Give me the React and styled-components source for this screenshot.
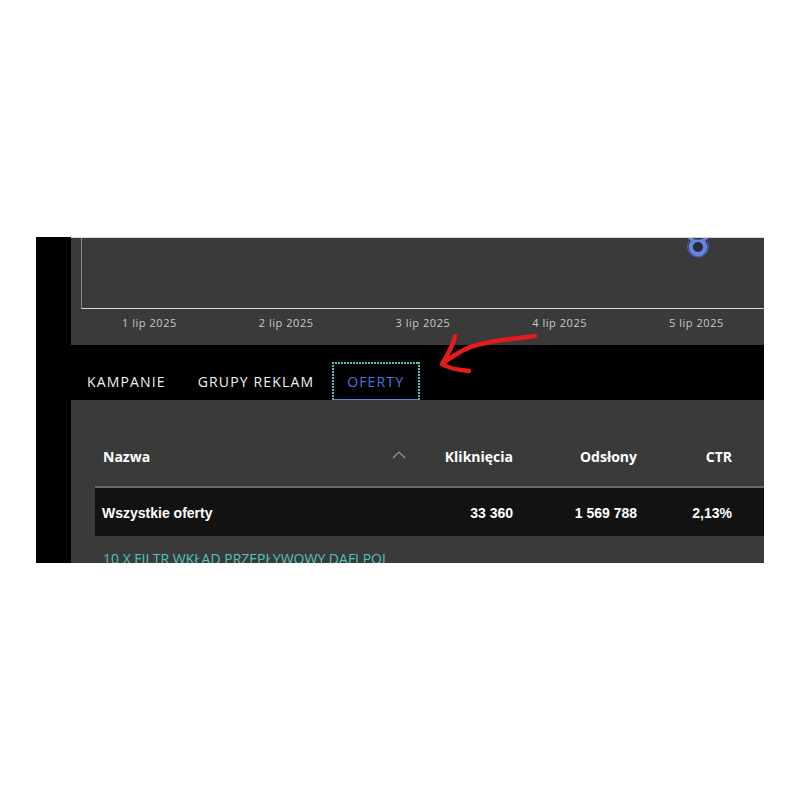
import React from "react";
import styled, { createGlobalStyle } from "styled-components";

const GlobalStyle = createGlobalStyle`
  html, body {
    margin: 0;
    background: #fff;
    font-family: "Open Sans", sans-serif;
  }
`;

const dates = ["1 lip 2025", "2 lip 2025", "3 lip 2025", "4 lip 2025", "5 lip 2025"];

const App = () => {
  return (
    <>
      <GlobalStyle />
      <Frame>
        <Sidebar />
        <Main>
          <ChartPanel>
            <Plot>
              <Marker viewBox="0 0 24 24">
                <path d="M3 6 A10.5 10.5 0 1 0 21 6" stroke="#4c64b4" strokeWidth="1" fill="none" />
                <circle cx="12" cy="12" r="7.2" stroke="#6484e6" strokeWidth="4.2" fill="#2b2c30" />
                <path d="M8.5 3 H15.5 V4.6 H8.5 Z" fill="#3a3a3a" />
                <path d="M3 2.5 L7.5 6 M21 2.5 L16.5 6" stroke="#6484e6" strokeWidth="3" fill="none" />
              </Marker>
            </Plot>
            <Dates>
              {dates.map((date) => (
                <DateLabel key={date}>{date}</DateLabel>
              ))}
            </Dates>
          </ChartPanel>
          <Tabs>
            <Tab>KAMPANIE</Tab>
            <Tab>GRUPY REKLAM</Tab>
            <ActiveTab>OFERTY</ActiveTab>
            <Arrow viewBox="0 0 120 60">
              <path
                d="M95 2 C78 4 60 6 46 9 C36 11 26 14 20 18 C13 22 7 26 2 30 M15 2 C13 12 7 22 2 30 C8 34 18 36 29 37"
                fill="none"
                stroke="#e61b1f"
                strokeWidth="4.5"
                strokeLinecap="round"
                strokeLinejoin="round"
              />
            </Arrow>
          </Tabs>
          <TablePanel>
            <HeaderRow>
              <HeaderName>
                Nazwa
                <Chevron viewBox="0 0 14 8">
                  <path d="M1 7 L7 1 L13 7" fill="none" stroke="#9a9a9a" strokeWidth="1.2" />
                </Chevron>
              </HeaderName>
              <HeaderCell>Kliknięcia</HeaderCell>
              <HeaderCell>Odsłony</HeaderCell>
              <HeaderCell>CTR</HeaderCell>
            </HeaderRow>
            <TotalRow>
              <TotalName>Wszystkie oferty</TotalName>
              <TotalCell>33 360</TotalCell>
              <TotalCell>1 569 788</TotalCell>
              <TotalCell>2,13%</TotalCell>
            </TotalRow>
            <OfferLink>10 X FILTR WKŁAD PRZEPŁYWOWY DAFI POJ</OfferLink>
          </TablePanel>
        </Main>
      </Frame>
    </>
  );
};

export default App;

const Frame = styled.div`
  display: flex;
  width: 728px;
  height: 326px;
  margin: 237px 36px 0;
  overflow: hidden;
  background: #000;
`;

const Sidebar = styled.div`
  flex: 0 0 35px;
  background: #000;
`;

const Main = styled.div`
  flex: 1;
  min-width: 0;
  display: flex;
  flex-direction: column;
`;

const ChartPanel = styled.div`
  flex: 0 0 108px;
  padding: 0 0 0 10px;
  box-sizing: border-box;
  background: #3a3a3a;
  border-top: 1px solid #d8d8d8;
`;

const Plot = styled.div`
  position: relative;
  height: 71px;
  box-sizing: border-box;
  overflow: hidden;
  border-left: 1px solid #8a8a8a;
  border-bottom: 1px solid #c9d8f0;
`;

const Marker = styled.svg`
  position: absolute;
  left: 603.5px;
  top: -3px;
  width: 24px;
  height: 24px;
`;

const Dates = styled.div`
  display: grid;
  grid-template-columns: repeat(5, 136.75px);
  padding-top: 5px;
`;

const DateLabel = styled.div`
  text-align: center;
  font-size: 11px;
  line-height: 18px;
  letter-spacing: 0.55px;
  color: #c8c8c8;
`;

const Tabs = styled.div`
  position: relative;
  flex: 0 0 55px;
  min-height: 0;
  display: flex;
  align-items: stretch;
  box-sizing: border-box;
  padding-top: 17px;
  background: #000;
`;

const Tab = styled.div`
  padding: 0 16px;
  font-size: 14px;
  line-height: 40px;
  letter-spacing: 1.15px;
  color: #f2f2f2;
`;

const ActiveTab = styled.div`
  padding: 0 16px 0 15px;
  margin-left: 2px;
  font-size: 14px;
  line-height: 40px;
  letter-spacing: 1.15px;
  color: #4f74e3;
  background-image:
    repeating-linear-gradient(90deg, #4fc3bd 0 2px, transparent 2px 3px),
    repeating-linear-gradient(0deg, #4fc3bd 0 2px, transparent 2px 3px),
    repeating-linear-gradient(0deg, #4fc3bd 0 2px, transparent 2px 3px);
  background-size: 100% 2px, 2px 100%, 2px 100%;
  background-position: top, left, right;
  background-repeat: no-repeat;
  box-shadow: inset 0 -1px 0 #5f83e6;
`;

const Arrow = styled.svg`
  position: absolute;
  left: 369px;
  top: -11px;
  width: 120px;
  height: 60px;
  overflow: visible;
`;

const TablePanel = styled.div`
  flex: 1;
  min-height: 0;
  padding-left: 24px;
  background: #3a3a3a;
`;

const HeaderRow = styled.div`
  display: grid;
  grid-template-columns: 318px 100px 124px 95px 32px;
  align-items: center;
  height: 88px;
  box-sizing: border-box;
  padding-top: 26px;
  border-bottom: 2px solid #6a6a6a;
`;

const HeaderName = styled.div`
  display: flex;
  align-items: center;
  justify-content: space-between;
  padding: 0 7px 0 8px;
  font-size: 14px;
  font-weight: 700;
  color: #fff;
`;

const Chevron = styled.svg`
  width: 14px;
  height: 8px;
  margin-top: -2px;
`;

const HeaderCell = styled.div`
  text-align: right;
  font-size: 14px;
  font-weight: 700;
  color: #fff;
`;

const TotalRow = styled.div`
  display: grid;
  grid-template-columns: 318px 100px 124px 95px 32px;
  align-items: center;
  height: 48px;
  box-sizing: border-box;
  padding-top: 1px;
  background: #121212;
`;

const TotalName = styled.div`
  padding-left: 7px;
  font-family: "Liberation Sans", Arial, sans-serif;
  font-size: 14px;
  font-weight: 700;
  color: #fff;
`;

const TotalCell = styled.div`
  text-align: right;
  font-family: "Liberation Sans", Arial, sans-serif;
  font-size: 14px;
  font-weight: 700;
  color: #fff;
`;

const OfferLink = styled.div`
  padding: 13px 0 0 8px;
  font-size: 14px;
  line-height: 20px;
  white-space: nowrap;
  color: #4fc3bd;
`;
